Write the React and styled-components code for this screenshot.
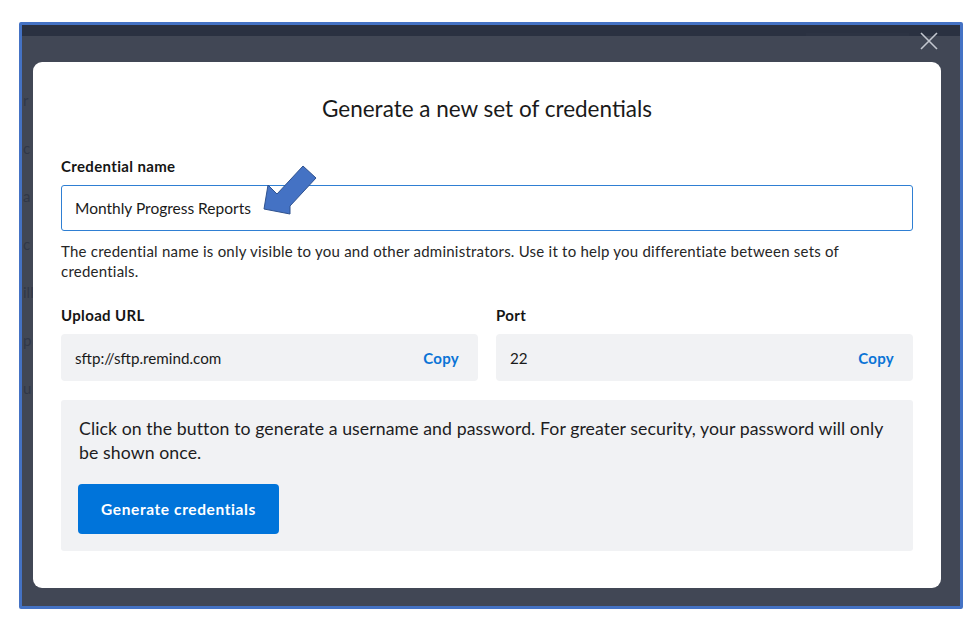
import React from 'react';
import styled, { createGlobalStyle } from 'styled-components';

const GlobalStyle = createGlobalStyle`
    html, body {
        margin: 0;
        padding: 0;
        background: #ffffff;
        font-family: Lato, "Open Sans", Arial, sans-serif;
    }
`;

const Page = styled.div`
    width: 978px;
    height: 628px;
    padding: 22px 0 0 19px;
    box-sizing: border-box;
`;

const Frame = styled.div`
    position: relative;
    width: 944px;
    height: 587px;
    border: 3px solid #4472c4;
    border-radius: 2px;
    box-sizing: border-box;
    overflow: hidden;
    background: #ffffff;
`;

const BehindPage = styled.div`
    display: flex;
    flex-direction: column;
    height: 100%;
`;

const BehindHeader = styled.div`
    height: 11px;
    background: #1a2136;
    display: flex;
    justify-content: flex-end;
    align-items: flex-end;
    padding-right: 51px;
`;

const BehindTab = styled.div`
    width: 103px;
    height: 3px;
    background: #2e3548;
`;

const BehindList = styled.div`
    display: flex;
    flex-direction: column;
    gap: 28px;
    padding: 54px 0 0 1px;
    font-size: 15px;
    line-height: 20px;
    color: #5a6170;
`;

const Overlay = styled.div`
    position: absolute;
    inset: 0;
    background: rgba(44, 51, 67, 0.9);
    padding: 37px 19px 18px 11px;
    box-sizing: border-box;
`;

const CloseButton = styled.button`
    position: absolute;
    top: 6px;
    right: 21px;
    width: 20px;
    height: 20px;
    padding: 0;
    border: none;
    background: none;
    cursor: pointer;
`;

const Modal = styled.div`
    background: #ffffff;
    border-radius: 9px;
    height: 526px;
    padding: 33px 28px 37px;
    box-sizing: border-box;
    display: flex;
    flex-direction: column;
    color: #1d1d1f;
`;

const Title = styled.h2`
    margin: 0 0 33px;
    font-size: 22.5px;
    line-height: 28px;
    font-weight: 400;
    text-align: center;
    color: #1a1a1a;
`;

const Label = styled.div`
    font-size: 15px;
    line-height: 20px;
    font-weight: 700;
    letter-spacing: 0.35px;
    margin-bottom: 9px;
    color: #151515;
`;

const InputWrap = styled.div`
    position: relative;
`;

const TextInput = styled.input`
    display: block;
    width: 100%;
    height: 46px;
    box-sizing: border-box;
    border: 1px solid #2f7fd3;
    border-radius: 3px;
    padding: 0 13px;
    font-family: inherit;
    font-size: 15.5px;
    color: #1a1a1a;
    outline: none;
`;

const Arrow = styled.svg`
    position: absolute;
    left: 200px;
    top: -22px;
`;

const Help = styled.p`
    margin: 10px 0 24px;
    max-width: 800px;
    font-size: 15px;
    letter-spacing: 0.23px;
    line-height: 20px;
    color: #262626;
`;

const FieldRow = styled.div`
    display: grid;
    grid-template-columns: 1fr 1fr;
    gap: 18px;
    margin-bottom: 19px;
`;

const Field = styled.div`
    display: flex;
    flex-direction: column;
`;

const ReadOnly = styled.div`
    height: 47px;
    background: #f1f2f4;
    border-radius: 4px;
    display: flex;
    align-items: center;
    justify-content: space-between;
    padding: 0 19px 0 14px;
    font-size: 15.2px;
    color: #1a1a1a;
`;

const CopyLink = styled.button`
    border: none;
    background: none;
    padding: 0;
    font-family: inherit;
    font-size: 15px;
    font-weight: 700;
    letter-spacing: 0.3px;
    color: #0b74d6;
    cursor: pointer;
`;

const Panel = styled.div`
    background: #f1f2f4;
    border-radius: 3px;
    padding: 17px 26px 17px 18px;
`;

const PanelText = styled.p`
    margin: 0 0 19px;
    font-size: 17.7px;
    letter-spacing: 0.08px;
    line-height: 24px;
    color: #1d1d1f;
`;

const PrimaryButton = styled.button`
    height: 50px;
    width: 201px;
    padding: 0;
    margin-left: -1px;
    border: none;
    border-radius: 4px;
    background: #0074da;
    color: #ffffff;
    font-family: inherit;
    font-size: 15.5px;
    font-weight: 700;
    letter-spacing: 0.6px;
    cursor: pointer;
`;

const behindWords = ['r', 'c', 'a', 'c', 'ill', 'p', 'u'];

export default function App() {
    return (
        <Page>
            <GlobalStyle />
            <Frame>
                <BehindPage>
                    <BehindHeader>
                        <BehindTab />
                    </BehindHeader>
                    <BehindList>
                        {behindWords.map((w, i) => <span key={i}>{w}</span>)}
                    </BehindList>
                </BehindPage>
                <Overlay>
                    <CloseButton aria-label="Close">
                        <svg width="20" height="20" viewBox="0 0 20 20">
                            <path d="M2 2 L18 18 M18 2 L2 18" stroke="#c3c7cf" strokeWidth="1.6" fill="none" />
                        </svg>
                    </CloseButton>
                    <Modal>
                        <Title>Generate a new set of credentials</Title>
                        <Label>Credential name</Label>
                        <InputWrap>
                            <TextInput defaultValue="Monthly Progress Reports" />
                            <Arrow width="60" height="56" viewBox="0 0 60 56">
                                <polygon
                                    points="3,46 7,22 16,31 42,3 55,15 29,43 29,51"
                                    fill="#4472c4"
                                    stroke="#2f528f"
                                    strokeWidth="1"
                                />
                            </Arrow>
                        </InputWrap>
                        <Help>
                            The credential name is only visible to you and other administrators. Use it to help you differentiate between sets of credentials.
                        </Help>
                        <FieldRow>
                            <Field>
                                <Label>Upload URL</Label>
                                <ReadOnly>
                                    <span>sftp://sftp.remind.com</span>
                                    <CopyLink>Copy</CopyLink>
                                </ReadOnly>
                            </Field>
                            <Field>
                                <Label>Port</Label>
                                <ReadOnly>
                                    <span>22</span>
                                    <CopyLink>Copy</CopyLink>
                                </ReadOnly>
                            </Field>
                        </FieldRow>
                        <Panel>
                            <PanelText>
                                Click on the button to generate a username and password. For greater security, your password will only be shown once.
                            </PanelText>
                            <PrimaryButton>Generate credentials</PrimaryButton>
                        </Panel>
                    </Modal>
                </Overlay>
            </Frame>
        </Page>
    );
}
